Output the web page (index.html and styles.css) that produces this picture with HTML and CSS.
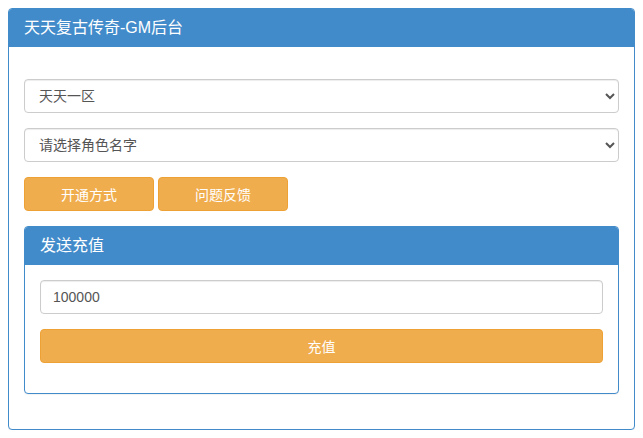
FILE: index.html
```html
<!DOCTYPE html>
<html lang="zh">
<head>
<meta charset="utf-8">
<title>天天复古传奇-GM后台</title>
<link rel="stylesheet" href="styles.css">
</head>
<body>
<div class="panel">
  <div class="panel-heading">天天复古传奇-GM后台</div>
  <div class="panel-body outer-body">
    <select class="form-control field">
      <option>天天一区</option>
    </select>
    <select class="form-control field">
      <option>请选择角色名字</option>
    </select>
    <div class="btn-row">
      <button class="btn btn-warning btn-small">开通方式</button>
      <button class="btn btn-warning btn-small">问题反馈</button>
    </div>
    <div class="panel inner">
      <div class="panel-heading">发送充值</div>
      <div class="panel-body">
        <input class="form-control field" type="text" value="100000">
        <button class="btn btn-warning btn-block">充值</button>
      </div>
    </div>
  </div>
</div>
</body>
</html>
```
FILE: styles.css
```css
* { box-sizing: border-box; }
body {
  margin: 8px;
  font-family: "Liberation Sans", "Noto Sans CJK SC", sans-serif;
  font-size: 14px;
  color: #333;
  background: #fff;
}
.panel {
  border: 1px solid #428bca;
  border-radius: 4px;
  background: #fff;
  box-shadow: 0 1px 1px rgba(0,0,0,0.05);
}
.panel-heading {
  background: #428bca;
  color: #fff;
  font-size: 16px;
  line-height: 18px;
  padding: 10px 15px;
  border-radius: 3px 3px 0 0;
}
.panel-body {
  padding: 15px;
  display: flex;
  flex-direction: column;
}
.outer-body {
  padding-top: 32px;
}
.form-control {
  height: 34px;
  width: 100%;
  padding: 6px 12px;
  font-family: inherit;
  font-size: 14px;
  color: #555;
  background: #fff;
  border: 1px solid #ccc;
  border-radius: 4px;
  box-shadow: inset 0 1px 1px rgba(0,0,0,0.075);
}
select.form-control { padding: 6px 8px 6px 10px; }
.field { margin-bottom: 15px; }
.btn {
  height: 34px;
  padding: 6px 12px;
  font-family: inherit;
  font-size: 14px;
  color: #fff;
  border-radius: 4px;
  cursor: pointer;
}
.btn-warning {
  background: #f0ad4e;
  border: 1px solid #eea236;
}
.btn-row {
  display: flex;
  gap: 4px;
  margin-bottom: 15px;
}
.btn-small { width: 130px; }
.btn-block {
  width: 100%;
  margin-bottom: 15px;
}
.inner {
  margin-bottom: 20px;
}
```
